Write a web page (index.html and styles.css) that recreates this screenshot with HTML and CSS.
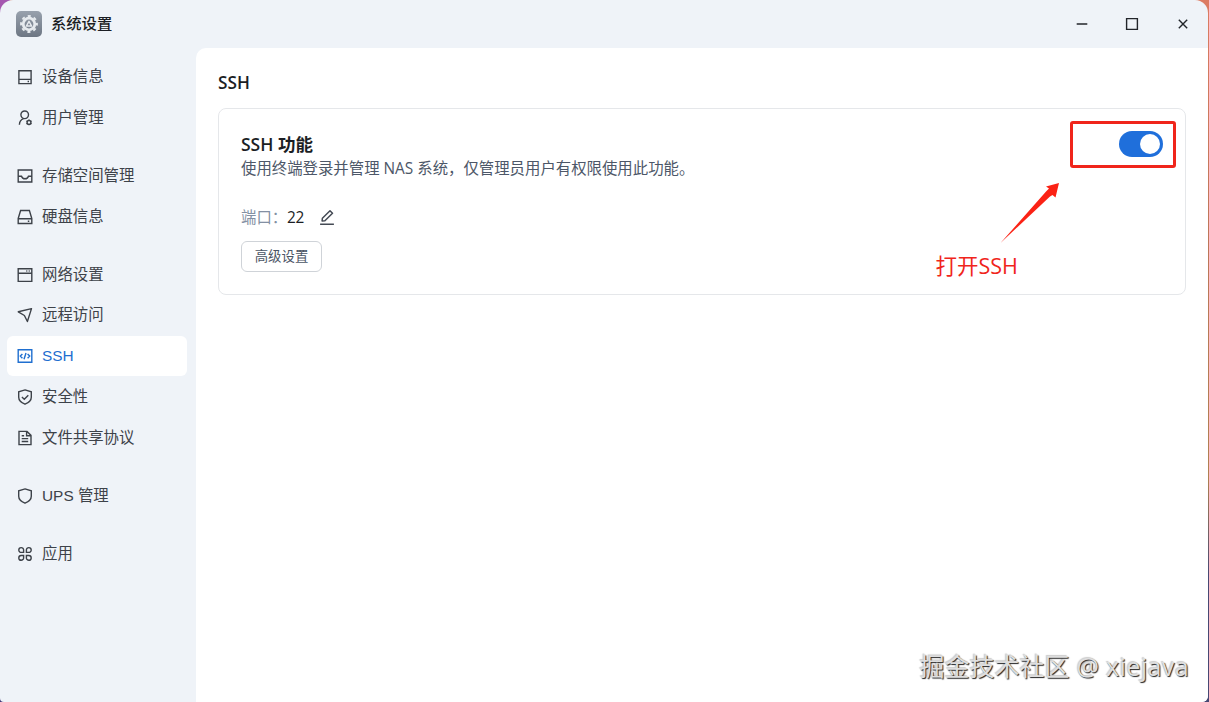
FILE: index.html
```
<!DOCTYPE html>
<html lang="zh-CN">
<head>
    <meta charset="UTF-8">
    <title>系统设置</title>
    <link rel="stylesheet" href="styles.css">
</head>
<body>
    <div class="window">
        <header class="titlebar">
            <svg class="app-icon" viewBox="0 0 26 26">
                <defs>
                    <linearGradient id="app-bg" x1="0" y1="0" x2="0" y2="1">
                        <stop offset="0" stop-color="#98a1ad"/>
                        <stop offset="1" stop-color="#6d7683"/>
                    </linearGradient>
                </defs>
                <rect width="26" height="26" rx="5" fill="url(#app-bg)"/>
                <circle cx="13" cy="13" r="5.8" fill="none" stroke="#e6eaee" stroke-width="2.8"/>
                <circle cx="13" cy="13" r="7.9" fill="none" stroke="#e6eaee" stroke-width="2" stroke-dasharray="3.1 3.105" stroke-dashoffset="1.55"/>
                <path d="M13 10.3l2.6 4.7h-5.2z" fill="none" stroke="#e6eaee" stroke-width="1.5" stroke-linejoin="round"/>
            </svg>
            <h1 class="app-title">系统设置</h1>
            <div class="window-controls">
                <svg viewBox="0 0 14 14"><path d="M1.7 7h10.6"/></svg>
                <svg viewBox="0 0 14 14"><path d="M1.6 1.6h10.8v10.8H1.6z"/></svg>
                <svg viewBox="0 0 14 14"><path d="M2.8 2.8l8.4 8.4M11.2 2.8l-8.4 8.4"/></svg>
            </div>
        </header>

        <div class="main">
            <nav class="sidebar">
                <div class="nav-group">
                    <a class="nav-item">
                        <svg viewBox="0 0 16 16"><path d="M1.9 1.7h12.2v12.9H1.9zM1.9 10.4h12.2M10.6 12.5h1.4"/></svg>
                        <span>设备信息</span>
                    </a>
                    <a class="nav-item">
                        <svg viewBox="0 0 16 16"><circle cx="7.7" cy="4.8" r="3.8"/><path d="M6.6 8.6C4 9.4 2.5 11.5 2.4 14.7"/><circle cx="12" cy="12.4" r="1.9"/><path d="M12 9.5v1M12 14.3v1M9.5 10.95l.9.5M13.6 13.35l.9.5M9.5 13.85l.9-.5M13.6 11.45l.9-.5"/></svg>
                        <span>用户管理</span>
                    </a>
                </div>
                <div class="nav-group">
                    <a class="nav-item">
                        <svg viewBox="0 0 16 16"><path d="M1.2 2h13.6v12H1.2zM1.2 8.2h3.3c.5 1.7 1.7 2.6 3.5 2.6s3-.9 3.5-2.6h3.3"/></svg>
                        <span>存储空间管理</span>
                    </a>
                    <a class="nav-item">
                        <svg viewBox="0 0 16 16"><path d="M1.2 9.5l2.4-8h8.8l2.4 8v5H1.2zM1.2 9.7h13.6M10.8 12.2h1.5"/></svg>
                        <span>硬盘信息</span>
                    </a>
                </div>
                <div class="nav-group">
                    <a class="nav-item">
                        <svg viewBox="0 0 16 16"><path d="M1.2 1.7h13.6v12.7H1.2zM1.2 6.2h13.6M9.3 4h1M11.7 4h1"/></svg>
                        <span>网络设置</span>
                    </a>
                    <a class="nav-item">
                        <svg viewBox="0 0 16 16"><path d="M14.5 1.6L1.3 4.8l6.1 3.7 3 6z" stroke-linejoin="round"/></svg>
                        <span>远程访问</span>
                    </a>
                    <a class="nav-item active">
                        <svg viewBox="0 0 16 16"><path d="M1.2 1.7h13.6v12.6H1.2zM5.4 6L3.3 8.1l2.1 2.1M10.6 6l2.1 2.1-2.1 2.1M9 5l-2 6.2"/></svg>
                        <span>SSH</span>
                    </a>
                    <a class="nav-item">
                        <svg viewBox="0 0 16 16"><path d="M8 .9l6.3 1.9v5.4c0 3.2-2.5 5.4-6.3 7-3.8-1.6-6.3-3.8-6.3-7V2.8zM4.9 7.9l2.4 2.3 4-4"/></svg>
                        <span>安全性</span>
                    </a>
                    <a class="nav-item">
                        <svg viewBox="0 0 16 16"><path d="M2 1.4h8l4 4v9.2H2zM9.6 1.6v4.2h4.2M4.7 5.7h2.4M4.7 8.6h6.5M4.7 11.5h6.5"/></svg>
                        <span>文件共享协议</span>
                    </a>
                </div>
                <div class="nav-group">
                    <a class="nav-item">
                        <svg viewBox="0 0 16 16"><path d="M8 .9l6.3 1.9v5.4c0 3.2-2.5 5.4-6.3 7-3.8-1.6-6.3-3.8-6.3-7V2.8z"/></svg>
                        <span>UPS 管理</span>
                    </a>
                </div>
                <div class="nav-group">
                    <a class="nav-item">
                        <svg viewBox="0 0 16 16"><path d="M4.2 1.6A2.4 2.4 0 0 1 6.6 4v2.4H4.2a2.4 2.4 0 0 1 0-4.8zM11.8 1.6a2.4 2.4 0 0 1 0 4.8H9.4V4a2.4 2.4 0 0 1 2.4-2.4zM4.2 9.5h2.4v2.4a2.4 2.4 0 1 1-2.4-2.4zM9.4 9.5h2.4a2.4 2.4 0 1 1-2.4 2.4z"/></svg>
                        <span>应用</span>
                    </a>
                </div>
            </nav>

            <main class="content">
                <h2 class="page-title">SSH</h2>
                <section class="card">
                    <div class="card-head">
                        <div>
                            <h3 class="card-title">SSH 功能</h3>
                            <p class="card-desc">使用终端登录并管理 NAS 系统，仅管理员用户有权限使用此功能。</p>
                        </div>
                        <div class="switch"></div>
                    </div>
                    <div class="port-row">
                        <span class="port-label">端口：</span>
                        <span class="port-value">22</span>
                        <svg class="edit-icon" viewBox="0 0 16 16"><path d="M1.1 14.2h13.8M3.1 11l.3-2.8L11 .8l2.5 2.5-7.6 7.4z" stroke-linejoin="round"/></svg>
                    </div>
                    <button class="btn">高级设置</button>
                </section>
            </main>
        </div>
    </div>

    <!-- annotations over the window -->
    <div class="mark-box"></div>
    <svg class="mark-arrow" viewBox="0 0 60 62"><path d="M0.5 61L50 14.5 52.5 13 55.5 15.5 59 1 46 4.5 49 6.5 46.5 9z"/></svg>
    <div class="mark-text">打开SSH</div>
    <div class="watermark">掘金技术社区<span class="watermark-user"> @ xiejava</span></div>
</body>
</html>
```
FILE: styles.css
```
* {
    box-sizing: border-box;
}

body {
    margin: 0;
    height: 702px;
    overflow: hidden;
    position: relative;
    font-family: "Open Sans", "Noto Sans CJK SC", sans-serif;
    background: linear-gradient(90deg, #a557b0 0, #a557b0 10px, transparent 10px) 0 0 / 20px 20px no-repeat,
        linear-gradient(90deg, #413a78 0, #413a78 10px, transparent 10px) 0 100% / 20px 20px no-repeat,
        linear-gradient(180deg, #dc7b62 0, #bd7658 35%, #b08050 68%, #474873 82%, #474873 100%);
}

h1, h2, h3, p {
    margin: 0;
}

svg {
    display: block;
    flex: none;
}

.window {
    width: 1208px;
    height: 702px;
    display: flex;
    flex-direction: column;
    background: #eff3f8;
    border-radius: 13px 13px 6px 4px;
    overflow: hidden;
}

.titlebar {
    height: 48px;
    flex: none;
    display: flex;
    align-items: center;
    padding: 0 18.5px 0 16px;
}

.app-icon {
    width: 26px;
    height: 26px;
}

.app-title {
    margin: -2px 0 0 9px;
    font-size: 15.3px;
    line-height: 22px;
    font-weight: 500;
    color: #1b1e24;
}

.window-controls {
    margin-left: auto;
    display: flex;
    gap: 36.5px;
}

.window-controls svg {
    width: 14px;
    height: 14px;
    fill: none;
    stroke: #22252a;
    stroke-width: 1.4;
}

.main {
    flex: 1;
    display: flex;
}

.sidebar {
    width: 196px;
    padding: 9px 9px 0 7px;
    display: flex;
    flex-direction: column;
    gap: 18px;
}

.nav-group {
    display: flex;
    flex-direction: column;
    gap: 0.8px;
}

.nav-item {
    height: 40px;
    padding-left: 10px;
    display: flex;
    align-items: center;
    gap: 9px;
    border-radius: 6px;
    font-family: "Liberation Sans", "Noto Sans CJK SC", sans-serif;
    font-size: 15.4px;
    line-height: 22px;
    color: #3d4249;
}

.nav-item svg {
    width: 16px;
    height: 16px;
    fill: none;
    stroke: currentColor;
    stroke-width: 1.4;
}

.nav-item.active {
    background: #fff;
    color: #1f6fd0;
}

.content {
    flex: 1;
    background: #fff;
    border-top-left-radius: 10px;
    padding: 22px 22px 0;
}

.page-title {
    height: 38px;
    font-size: 17.2px;
    line-height: 26px;
    font-weight: 600;
    color: #1b1e24;
}

.card {
    height: 187px;
    border: 1px solid #e5e7ea;
    border-radius: 8px;
    padding: 22px;
}

.card-head {
    display: flex;
    justify-content: space-between;
}

.card-title {
    font-size: 17.5px;
    line-height: 27px;
    font-weight: 600;
    color: #1b1e24;
}

.card-desc {
    font-size: 15.4px;
    line-height: 22px;
    color: #4d5768;
    white-space: nowrap;
}

.switch {
    width: 44px;
    height: 26px;
    padding: 3px;
    border-radius: 13px;
    background: #1f6fdb;
}

.switch::after {
    content: "";
    display: block;
    width: 20px;
    height: 20px;
    margin-left: auto;
    border-radius: 50%;
    background: #fff;
}

.port-row {
    margin-top: 26px;
    height: 23px;
    display: flex;
    align-items: center;
    font-size: 15.4px;
    line-height: 23px;
}

.port-label {
    width: 46px;
    color: #8390a3;
    white-space: nowrap;
}

.port-value {
    font-size: 15.4px;
    letter-spacing: -0.3px;
    color: #1b1e24;
}

.edit-icon {
    width: 16px;
    height: 16px;
    margin-left: 15px;
    fill: none;
    stroke: #444a54;
    stroke-width: 1.5;
}

.btn {
    display: block;
    width: 81px;
    height: 31px;
    margin-top: 12px;
    padding: 0 0 1px;
    border: 1px solid #cfd3d8;
    border-radius: 6px;
    background: #fff;
    font-family: inherit;
    font-size: 13.4px;
    line-height: 27px;
    color: #4a5464;
}

.mark-box {
    position: absolute;
    left: 1070px;
    top: 121px;
    width: 106px;
    height: 47px;
    border: 3px solid #f0251b;
    border-radius: 3px;
}

.mark-arrow {
    position: absolute;
    left: 1000px;
    top: 182px;
    width: 60px;
    height: 62px;
    fill: #fb2215;
}

.mark-text {
    position: absolute;
    left: 935.5px;
    top: 251px;
    font-size: 21.5px;
    line-height: 30px;
    color: #f0251b;
    white-space: nowrap;
}

.watermark {
    position: absolute;
    left: 919.5px;
    top: 648px;
    font-size: 25px;
    line-height: 36px;
    color: #dedede;
    text-shadow: 1px 1px 1px #222, -1px -1px 1px #ccc;
    white-space: nowrap;
}

.watermark-user {
    letter-spacing: 0.4px;
}
```
